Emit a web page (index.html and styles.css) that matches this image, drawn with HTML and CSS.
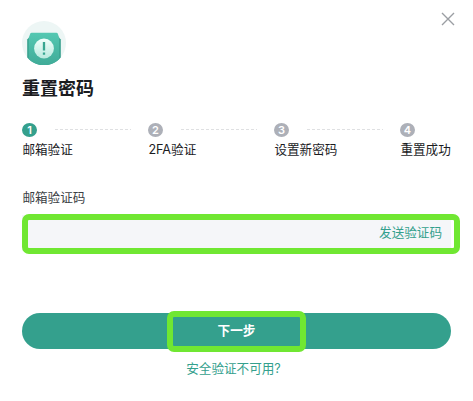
FILE: index.html
```html
<!DOCTYPE html>
<html lang="zh-CN">
<head>
    <meta charset="UTF-8">
    <meta name="viewport" content="width=device-width, initial-scale=1.0">
    <title>重置密码</title>
    <link rel="stylesheet" href="styles.css">
</head>
<body>
    <div class="dialog">
        <button class="close" aria-label="关闭">
            <svg width="14" height="14" viewBox="0 0 14 14" fill="none" stroke="#9b9ea3" stroke-width="1.4">
                <path d="M1 1L13 13M13 1L1 13"/>
            </svg>
        </button>
        <svg class="logo" width="44" height="44" viewBox="0 0 44 44">
            <defs>
                <linearGradient id="shield" x1="0" y1="0" x2="0" y2="1">
                    <stop offset="0" stop-color="#54c8b2"/>
                    <stop offset="1" stop-color="#40ab98"/>
                </linearGradient>
                <linearGradient id="disc" x1="0" y1="0" x2="0" y2="1">
                    <stop offset="0" stop-color="#f1fffb"/>
                    <stop offset="1" stop-color="#b9eadf"/>
                </linearGradient>
            </defs>
            <circle cx="22" cy="22" r="22" fill="#edf6f5"/>
            <path d="M5.2 18.500L8 15.500H36L38.800 18.500V36.500A22 22 0 0 1 5.200 36.500Z" fill="#36a08d"/>
            <path d="M9.600 11.700H34.400Q35.400 11.700 35.800 12.700L37.300 17V38A22 22 0 0 1 6.700 38V17L8.200 12.700Q8.600 11.700 9.600 11.700Z" fill="url(#shield)"/>
            <circle cx="22" cy="27.500" r="9.900" fill="url(#disc)"/>
            <path d="M22 21V29.500M22 31.500V33.800" stroke="#36a691" stroke-width="2.300"/>
        </svg>
        <h1>重置密码</h1>

        <div class="steps">
            <div class="step active">
                <div class="step-head"><span class="num">1</span><span class="line"></span></div>
                <div class="step-name">邮箱验证</div>
            </div>
            <div class="step">
                <div class="step-head"><span class="num">2</span><span class="line"></span></div>
                <div class="step-name">2FA验证</div>
            </div>
            <div class="step">
                <div class="step-head"><span class="num">3</span><span class="line"></span></div>
                <div class="step-name">设置新密码</div>
            </div>
            <div class="step last">
                <div class="step-head"><span class="num">4</span></div>
                <div class="step-name">重置成功</div>
            </div>
        </div>

        <div class="label">邮箱验证码</div>
        <div class="field">
            <a class="send">发送验证码</a>
            <div class="mark mark-field"></div>
        </div>

        <button class="next">下一步<span class="mark mark-next"></span></button>
        <a class="help">安全验证不可用?</a>
    </div>
</body>
</html>
```

FILE: styles.css
```css
* {
    box-sizing: border-box;
}
body {
    margin: 0;
    background: #fff;
    color: #1b1c1f;
    font-family: Inter, "Noto Sans CJK SC", sans-serif;
    font-size: 12.6px;
}
.dialog {
    position: relative;
    width: 473px;
    height: 401px;
    padding: 21px 22px 0;
}
.close {
    position: absolute;
    top: 12px;
    right: 18px;
    width: 14px;
    height: 14px;
    padding: 0;
    border: none;
    background: none;
}
.close svg,
.logo {
    display: block;
}
h1 {
    margin: 12px 0 0;
    font-size: 18px;
    line-height: 24px;
    font-weight: bold;
}

/* Steps */
.steps {
    display: flex;
    margin-top: 22px;
}
.step {
    width: 126px;
}
.step.last {
    width: 51px;
}
.step-head {
    display: flex;
    align-items: flex-start;
    height: 15px;
}
.num {
    width: 15px;
    height: 14px;
    border-radius: 50%;
    background: #adb0b8;
    color: #fff;
    font-size: 11px;
    font-weight: 600;
    line-height: 15px;
    text-align: center;
}
.active .num {
    background: #34a08d;
}
.line {
    width: 76px;
    height: 1px;
    margin-left: 18px;
    margin-top: 6px;
    background: repeating-linear-gradient(90deg, #dfe0e2 0 3px, transparent 3px 5px);
}
.step-name {
    margin-top: 3px;
    padding-left: 0.4px;
    line-height: 18px;
    white-space: nowrap;
}

/* Form */
.label {
    margin-top: 30px;
    padding-left: 0.4px;
    line-height: 18px;
    color: #3c3f45;
}
.field {
    position: relative;
    display: flex;
    align-items: flex-start;
    justify-content: flex-end;
    width: 429px;
    height: 36px;
    margin-top: 8px;
    padding: 9px 9px 0 0;
    background: #f5f6f9;
}
.send,
.help {
    line-height: 18px;
    color: #34a08d;
}
.next {
    position: relative;
    display: block;
    width: 429px;
    height: 36px;
    margin-top: 62px;
    padding: 0;
    border: none;
    border-radius: 18px;
    background: #34a08d;
    color: #fff;
    font: bold 12.6px/36px Inter, "Noto Sans CJK SC", sans-serif;
}
.help {
    display: block;
    width: 423px;
    margin-top: 11px;
    text-align: center;
}

/* Green highlight frames */
.mark {
    position: absolute;
    border: 6px solid #70e732;
    border-radius: 7px;
}
.mark-field {
    top: -1px;
    left: -0.5px;
    width: 438px;
    height: 40px;
}
.mark-next {
    top: -2px;
    left: 145px;
    width: 139px;
    height: 41px;
}
```
